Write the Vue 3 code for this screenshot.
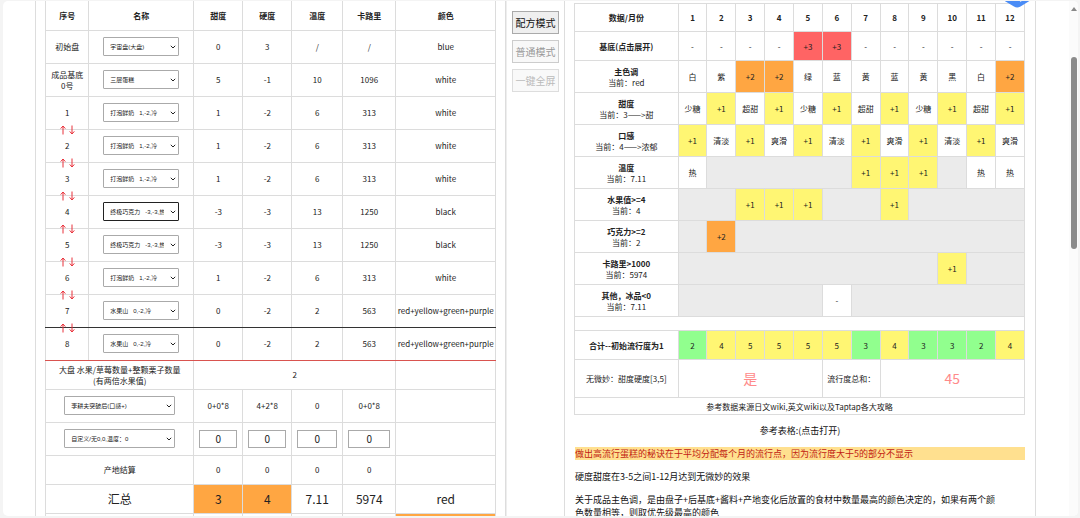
<script setup>
import { reactive, ref } from 'vue'

const nb = '\u00a0\u00a0\u00a0'
const milk = '打泡鲜奶' + nb + '1,-2,冷'
const choco = '终极巧克力' + nb + '-3,-3,热'
const fruit = '水果山' + nb + '0,-2,冷'

const rows = reactive([
  { no: '初始盘', name: '宇宙盘(大盘)', v: ['0', '3', '/', '/', 'blue'] },
  { no: '成品基底', sub: '0号', name: '三层蛋糕', v: ['5', '-1', '10', '1096', 'white'] },
  { no: '1', name: milk, v: ['1', '-2', '6', '313', 'white'], swap: true },
  { no: '2', name: milk, v: ['1', '-2', '6', '313', 'white'], swap: true },
  { no: '3', name: milk, v: ['1', '-2', '6', '313', 'white'], swap: true },
  { no: '4', name: choco, v: ['-3', '-3', '13', '1250', 'black'], swap: true, active: true },
  { no: '5', name: choco, v: ['-3', '-3', '13', '1250', 'black'], swap: true },
  { no: '6', name: milk, v: ['1', '-2', '6', '313', 'white'], swap: true },
  { no: '7', name: fruit, v: ['0', '-2', '2', '563', 'red+yellow+green+purple'], swap: true, line: 'dark' },
  { no: '8', name: fruit, v: ['0', '-2', '2', '563', 'red+yellow+green+purple'], line: 'red' }
])

const custom = reactive([
  { label: '甜度', value: '0' },
  { label: '硬度', value: '0' },
  { label: '温度', value: '0' },
  { label: '卡路里', value: '0' }
])
const skill = ref('李耕夫突破后(口感+)')
const origin = ref('自定义/无0,0,温度：0')

const tone = { '+1': 'yellow', '+2': 'orange', '+3': 'coral' }
const cells = (list) => list.map((c) => (typeof c === 'number' ? { t: '', span: c, k: 'gray' } : { t: c, span: 1, k: tone[c] || '' }))

const months = [
  { title: '基底(点击展开)', cells: cells(['-', '-', '-', '-', '+3', '+3', '-', '-', '-', '-', '-', '-']) },
  { title: '主色调', now: 'red', cells: cells(['白', '紫', '+2', '+2', '绿', '蓝', '黄', '蓝', '黄', '黑', '白', '+2']) },
  { title: '甜度', now: '3——>甜', cells: cells(['少糖', '+1', '超甜', '+1', '少糖', '+1', '超甜', '+1', '少糖', '+1', '超甜', '+1']) },
  { title: '口感', now: '4——>浓郁', cells: cells(['+1', '清淡', '+1', '爽滑', '+1', '清淡', '+1', '爽滑', '+1', '清淡', '+1', '爽滑']) },
  { title: '温度', now: '7.11', cells: cells(['热', 5, '+1', '+1', '+1', 1, '热', '热']) },
  { title: '水果值>=4', now: '4', cells: cells([2, '+1', '+1', '+1', 2, '+1', 4]) },
  { title: '巧克力>=2', now: '2', cells: cells([1, '+2', 10]) },
  { title: '卡路里>1000', now: '5974', cells: cells([9, '+1', 2]) },
  { title: '其他，冰品<0', now: '7.11', cells: cells([5, '-', 6]) }
]
const totals = [2, 4, 5, 5, 5, 5, 3, 4, 3, 3, 2, 4]
</script>

<template>
  <div class="page">
    <main class="sheet">
      <section class="panel recipe">
        <table>
          <colgroup>
            <col class="c-no" /><col class="c-name" /><col class="c-sweet" /><col class="c-sweet" />
            <col class="c-temp" /><col class="c-cal" /><col />
          </colgroup>
          <thead>
            <tr class="h29">
              <th>序号</th><th>名称</th><th>甜度</th><th>硬度</th><th>温度</th><th>卡路里</th><th>颜色</th>
            </tr>
          </thead>
          <tbody>
            <tr v-for="r in rows" :key="r.no" class="h33" :class="r.line">
              <td class="no">
                {{ r.no }}<template v-if="r.sub"><br />{{ r.sub }}</template>
                <div v-if="r.swap" class="swap">
                  <button type="button" aria-label="上移">
                    <svg viewBox="0 0 6 10"><path d="M3 9.5V1M.7 3.6 3 1l2.300 2.600" /></svg>
                  </button>
                  <button type="button" aria-label="下移">
                    <svg viewBox="0 0 6 10"><path d="M3 .5V9M.7 6.400 3 9l2.300-2.600" /></svg>
                  </button>
                </div>
              </td>
              <td>
                <div class="pick">
                  <select v-model="r.name" :class="{ active: r.active }" :aria-label="r.no + '名称'">
                    <option>{{ r.name }}</option>
                  </select>
                  <svg viewBox="0 0 6 4"><path d="M.8.8 3 3 5.200.8" /></svg>
                </div>
              </td>
              <td v-for="(v, i) in r.v" :key="i">{{ v }}</td>
            </tr>
            <tr class="h29">
              <td colspan="2">大盘 水果/草莓数量+整颗栗子数量<br />(有两倍水果值)</td>
              <td colspan="4">2</td>
              <td></td>
            </tr>
            <tr class="h33">
              <td colspan="2">
                <div class="pick wide">
                  <select v-model="skill" aria-label="技能"><option>李耕夫突破后(口感+)</option></select>
                  <svg viewBox="0 0 6 4"><path d="M.8.8 3 3 5.200.8" /></svg>
                </div>
              </td>
              <td>0+0*8</td><td>4+2*8</td><td>0</td><td>0+0*8</td><td></td>
            </tr>
            <tr class="h33">
              <td colspan="2">
                <div class="pick wide">
                  <select v-model="origin" aria-label="产地"><option>自定义/无0,0,温度：0</option></select>
                  <svg viewBox="0 0 6 4"><path d="M.8.8 3 3 5.200.8" /></svg>
                </div>
              </td>
              <td v-for="c in custom" :key="c.label" class="field">
                <input v-model="c.value" type="text" :aria-label="c.label" />
              </td>
              <td></td>
            </tr>
            <tr class="h29">
              <td colspan="2">产地结算</td>
              <td>0</td><td>0</td><td>0</td><td>0</td><td></td>
            </tr>
            <tr class="h29 sum">
              <td colspan="2">汇总</td>
              <td class="orange">3</td><td class="orange">4</td><td>7.11</td><td>5974</td><td>red</td>
            </tr>
            <tr class="h29">
              <td colspan="2"></td><td></td><td></td><td></td><td></td><td class="orange"></td>
            </tr>
          </tbody>
        </table>
      </section>

      <nav class="modes">
        <button type="button">配方模式</button>
        <button type="button" class="dim">普通模式</button>
        <button type="button" disabled>一键全屏</button>
      </nav>

      <section class="panel trend">
        <svg class="ribbon" viewBox="0 0 28 8"><path d="M0 0h28l-10.500 6.500Q14 8.500 11 6.500Z" fill="#4a8cf6" /><path d="m16 0 1.500 2L20 0" fill="#d8e8ff" /></svg>
        <table>
          <colgroup><col class="c-label" /><col v-for="n in 12" :key="n" /></colgroup>
          <thead>
            <tr class="h29"><th>数据/月份</th><th v-for="n in 12" :key="n">{{ n }}</th></tr>
          </thead>
          <tbody>
            <tr v-for="m in months" :key="m.title" :class="m.now ? 'h32' : 'h29'">
              <td><b>{{ m.title }}</b><template v-if="m.now"><br />当前：{{ m.now }}</template></td>
              <td v-for="(c, i) in m.cells" :key="i" :colspan="c.span" :class="c.k">{{ c.t }}</td>
            </tr>
            <tr class="h14"><td colspan="13"></td></tr>
            <tr class="h29">
              <td><b>合计--初始流行度为1</b></td>
              <td v-for="(t, i) in totals" :key="i" :class="t < 4 ? 'green' : 'yellow'">{{ t }}</td>
            </tr>
            <tr class="h38">
              <td>无微妙：甜度硬度[3,5]</td>
              <td colspan="5" class="big">是</td>
              <td colspan="2">流行度总和：</td>
              <td colspan="5" class="big">45</td>
            </tr>
            <tr class="h17"><td colspan="13">参考数据来源日文wiki,英文wiki以及Taptap各大攻略</td></tr>
          </tbody>
        </table>
        <div class="notes">
          <p class="ref">参考表格:(点击打开)</p>
          <p class="mark">做出高流行蛋糕的秘诀在于平均分配每个月的流行点，因为流行度大于5的部分不显示</p>
          <p>硬度甜度在3-5之间1-12月达到无微妙的效果</p>
          <p class="narrow">关于成品主色调，是由盘子+后基底+酱料+产地变化后放置的食材中数量最高的颜色决定的，如果有两个颜色数量相等，则取优先级最高的颜色</p>
        </div>
      </section>

      <div class="scroll" aria-hidden="true">
        <svg viewBox="0 0 6 4"><path d="M0 4 3 0l3 4z" /></svg>
        <div class="track"><div class="thumb"></div></div>
        <svg viewBox="0 0 6 4"><path d="M0 0l3 4 3-4z" /></svg>
      </div>
    </main>
  </div>
</template>

<style>
html {
  background: #f4f4f4;
}
</style>

<style scoped>
* {
  box-sizing: border-box;
}
.page {
  height: 100vh;
  padding: 1px 2px 2px 3px;
  overflow: hidden;
  font-family: "Noto Sans CJK SC", sans-serif;
  font-size: 8px;
  line-height: 11px;
  color: #222;
}
.sheet {
  position: relative;
  display: grid;
  grid-template-columns: 471fr 58fr 472fr 42fr;
  height: 100%;
  padding-left: 3%;
  overflow: hidden;
  background: #fff;
  border-radius: 5px;
}
.panel {
  min-width: 0;
  padding: 0 9px;
  border: 1px solid #ddd;
  border-width: 0 1px;
}
.trend {
  position: relative;
  padding: 2px 10px 0 9px;
}
table {
  width: 100%;
  table-layout: fixed;
  border-collapse: collapse;
}
th,
td {
  padding: 0;
  text-align: center;
  vertical-align: middle;
  border: 1px solid #dcdcdc;
}
.recipe thead th {
  border-top: 0;
}
.c-no { width: 43px; }
.c-name { width: 105px; }
.c-sweet { width: 49px; }
.c-temp { width: 51px; }
.c-cal { width: 53px; }
.c-label { width: 23%; }
.h14 { height: 14px; }
.h17 { height: 17px; }
.h29 { height: 29px; }
.trend thead .h29 { height: 28px; }
.h32 { height: 32px; }
.h33 { height: 33px; }
.h38 { height: 38px; }
.dark td { border-bottom: 1px solid #333; }
.red td { border-bottom: 1px solid #d9534f; }
.orange { background: #ffa642; }
.yellow { background: #fff673; }
.green { background: #91ff8e; }
.coral { background: #ff6464; }
.gray { background: #ebebeb; }
.sum td { font-size: 12px; }
.big {
  font-size: 14px;
  color: #ff8a8a;
}
.no {
  position: relative;
}
.swap {
  position: absolute;
  z-index: 1;
  right: 0;
  bottom: -6px;
  left: 0;
  display: flex;
  gap: 3px;
  justify-content: center;
}
.swap button {
  width: 6px;
  height: 10px;
  padding: 0;
  background: none;
  border: 0;
}
.swap svg {
  display: block;
  width: 6px;
  height: 10px;
  fill: none;
  stroke: #e8303a;
}
.pick {
  position: relative;
  width: 76px;
  margin: 0 auto;
}
.wide {
  width: 111px;
}
.pick select {
  display: block;
  width: 100%;
  height: 19px;
  padding: 0 14px 0 6px;
  overflow: hidden;
  font: 6px "Liberation Sans", "Noto Sans CJK SC", sans-serif;
  color: #222;
  appearance: none;
  background: #fff;
  border: 1px solid #aaa;
  border-radius: 1px;
}
.pick select.active {
  border-color: #222;
}
.pick svg {
  position: absolute;
  top: 8px;
  right: 3px;
  width: 6px;
  height: 4px;
  pointer-events: none;
  fill: none;
  stroke: #222;
}
.field {
  padding: 0 5px;
}
.field input {
  display: block;
  width: 100%;
  height: 18px;
  padding: 0;
  font: inherit;
  font-size: 10px;
  color: #222;
  text-align: center;
  background: #fff;
  border: 1px solid #aaa;
}
.modes {
  display: flex;
  flex-direction: column;
  gap: 6px;
  padding: 10px 5px 0 5px;
  border-left: 1px solid #eee;
}
.modes button {
  height: 23px;
  padding: 0;
  font: inherit;
  font-size: 10px;
  color: #111;
  white-space: nowrap;
  background: #efefef;
  border: 1px solid #aaa;
}
.modes .dim {
  color: #999;
  background: #f8f8f8;
  border-color: #ccc;
}
.modes button:disabled {
  color: #bbb;
  background: #f9f9f9;
  border-color: #ddd;
}
.ribbon {
  position: absolute;
  top: -1px;
  right: 4px;
  width: 28px;
  height: 8px;
}
.notes {
  padding-left: 1px;
  font-size: 9px;
  line-height: 13px;
  color: #111;
}
.notes p {
  margin: 10px 0 0;
}
.notes .ref {
  margin-top: 9px;
  text-align: center;
}
.mark {
  color: #c21c13;
  background: #ffe08f;
}
.narrow {
  padding-right: 24px;
}
.scroll {
  display: flex;
  flex-direction: column;
  align-items: center;
  justify-self: end;
  width: 9px;
  padding: 6px 0;
  background: #fbfbfb;
}
.scroll svg {
  width: 6px;
  height: 4px;
  fill: #888;
}
.track {
  flex: 1;
  padding-top: 46px;
}
.thumb {
  width: 6px;
  height: 39%;
  min-height: 192px;
  background: #8b8b8b;
  border-radius: 3px;
}
</style>
